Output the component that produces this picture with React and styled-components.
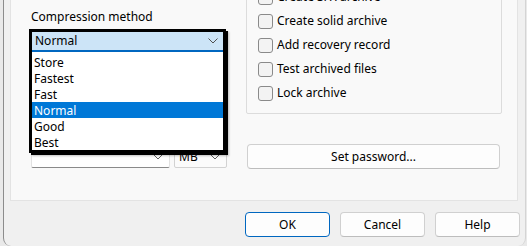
import React from "react";
import styled, { createGlobalStyle } from "styled-components";

const GlobalStyle = createGlobalStyle`
  html, body {
    margin: 0;
    padding: 0;
    background: #e9e9e9;
  }
  body {
    font-family: "Noto Sans", "Liberation Sans", sans-serif;
    font-size: 12px;
    color: #000;
  }
  * {
    box-sizing: border-box;
  }
`;

const Dialog = styled.div`
  margin-left: 3px;
  width: 523px;
  height: 246px;
  background: #f0f0f0;
  border-left: 1px solid #8c8c8c;
  border-right: 1px solid #d4d4d4;
  border-bottom-left-radius: 8px;
  border-bottom-right-radius: 8px;
  display: flex;
  flex-direction: column;
  overflow: hidden;
`;

const TabPage = styled.div`
  margin-left: 6px;
  width: 508px;
  height: 201px;
  background: #f9f9f9;
  border: 1px solid #e3e3e3;
  border-top: none;
  display: grid;
  grid-template-columns: 235px 1fr;
  padding-right: 15px;
`;

const LeftColumn = styled.div`
  padding: 9px 0 0 20px;
  display: flex;
  flex-direction: column;
  gap: 15px;
`;

const Field = styled.div`
  display: flex;
  flex-direction: column;
  gap: 5px;
`;

const Label = styled.div`
  line-height: 16px;
  height: 16px;
  white-space: nowrap;
`;

const ComboRow = styled.div`
  display: flex;
  gap: 4px;
`;

const ComboWrap = styled.div`
  position: relative;
`;

const Combo = styled.div`
  width: ${(p) => p.$width}px;
  height: 22px;
  background: ${(p) => (p.$list ? "#fbfbfb" : "#fff")};
  border: 1px solid ${(p) => (p.$list ? "#d2d2d2" : "#e2e2e2")};
  border-bottom-color: ${(p) => (p.$list ? "#d2d2d2" : "#8a8a8a")};
  border-radius: 2px;
  display: flex;
  align-items: center;
  justify-content: space-between;
  padding: 0 6px 0 4px;
  line-height: 16px;
`;

const Chevron = ({ color = "#606060" }) => (
  <svg width="10" height="6" viewBox="0 0 10 6">
    <path d="M0.5 0.5 L5 5 L9.5 0.5" fill="none" stroke={color} strokeWidth="1" />
  </svg>
);

// the open drop-down of the compression combo, drawn over the fields below it
const Popup = styled.div`
  position: absolute;
  left: -2px;
  top: -1px;
  width: 197px;
  border: 3px solid #000;
  background: #fff;
  box-shadow: 2px 2px 0 #000, 3px 3px 2px rgba(0, 0, 0, 0.25);
  z-index: 5;
`;

const PopupHead = styled.div`
  height: 20px;
  background: #cce4f7;
  border-bottom: 2px solid #0067c0;
  display: flex;
  align-items: center;
  justify-content: space-between;
  padding: 0 5px 0 3px;
  line-height: 16px;
`;

const PopupList = styled.div`
  padding-top: 2px;
`;

const Item = styled.div`
  height: 16px;
  line-height: 17px;
  padding-left: 2px;
  background: ${(p) => (p.$selected ? "#0078d7" : "transparent")};
  color: ${(p) => (p.$selected ? "#fff" : "#000")};
`;

const RightColumn = styled.div`
  display: flex;
  flex-direction: column;
`;

const GroupBox = styled.div`
  margin-top: -20px;
  border: 1px solid #dcdcdc;
  border-radius: 2px;
  padding: 4px 0 8px 11px;
  display: flex;
  flex-direction: column;
`;

const CheckRow = styled.label`
  height: 24px;
  display: flex;
  align-items: center;
  gap: 4px;
  line-height: 16px;
  white-space: nowrap;
`;

const CheckBox = styled.span`
  width: 15px;
  height: 15px;
  border: 1px solid #8a8a8a;
  border-radius: 3px;
  background: #f3f3f3;
  flex: none;
`;

const Button = styled.button`
  font: inherit;
  color: #000;
  height: 25px;
  width: ${(p) => p.$width || 85}px;
  background: #fdfdfd;
  border: 1px solid ${(p) => (p.$default ? "#0067c0" : "#d0d0d0")};
  border-bottom-color: ${(p) => (p.$default ? "#0067c0" : "#bdbdbd")};
  border-radius: 4px;
  padding: 0;
  line-height: 16px;
`;

const PasswordButton = styled(Button)`
  margin: 30px 0 0 1px;
`;

const ButtonBar = styled.div`
  margin-top: 11px;
  padding-right: 5px;
  display: flex;
  justify-content: flex-end;
  gap: 10px;
`;

const methods = ["Store", "Fastest", "Fast", "Normal", "Good", "Best"];
const options = [
  "Create SFX archive",
  "Create solid archive",
  "Add recovery record",
  "Test archived files",
  "Lock archive",
];

export default function App() {
  return (
    <>
      <GlobalStyle />
      <Dialog>
        <TabPage>
          <LeftColumn>
            <Field>
              <Label>Compression method</Label>
              <ComboWrap>
                <Combo $width={194} $list>
                  <span />
                  <Chevron />
                </Combo>
                <Popup>
                  <PopupHead>
                    <span>Normal</span>
                    <Chevron color="#505050" />
                  </PopupHead>
                  <PopupList>
                    {methods.map((m) => (
                      <Item key={m} $selected={m === "Normal"}>
                        {m}
                      </Item>
                    ))}
                  </PopupList>
                </Popup>
              </ComboWrap>
            </Field>
            {/* fields hidden under the open list keep their place only */}
            <Field>
              <Label />
              <Combo $width={194} $list>
                <span />
                <Chevron />
              </Combo>
            </Field>
            <Field>
              <Label />
              <ComboRow>
                <Combo $width={139}>
                  <span />
                  <Chevron />
                </Combo>
                <Combo $width={53} $list>
                  <span>MB</span>
                  <Chevron />
                </Combo>
              </ComboRow>
            </Field>
          </LeftColumn>
          <RightColumn>
            <GroupBox>
              {options.map((o) => (
                <CheckRow key={o}>
                  <CheckBox />
                  {o}
                </CheckRow>
              ))}
            </GroupBox>
            <PasswordButton $width={253}>Set password...</PasswordButton>
          </RightColumn>
        </TabPage>
        <ButtonBar>
          <Button $default>OK</Button>
          <Button>Cancel</Button>
          <Button>Help</Button>
        </ButtonBar>
      </Dialog>
    </>
  );
}
